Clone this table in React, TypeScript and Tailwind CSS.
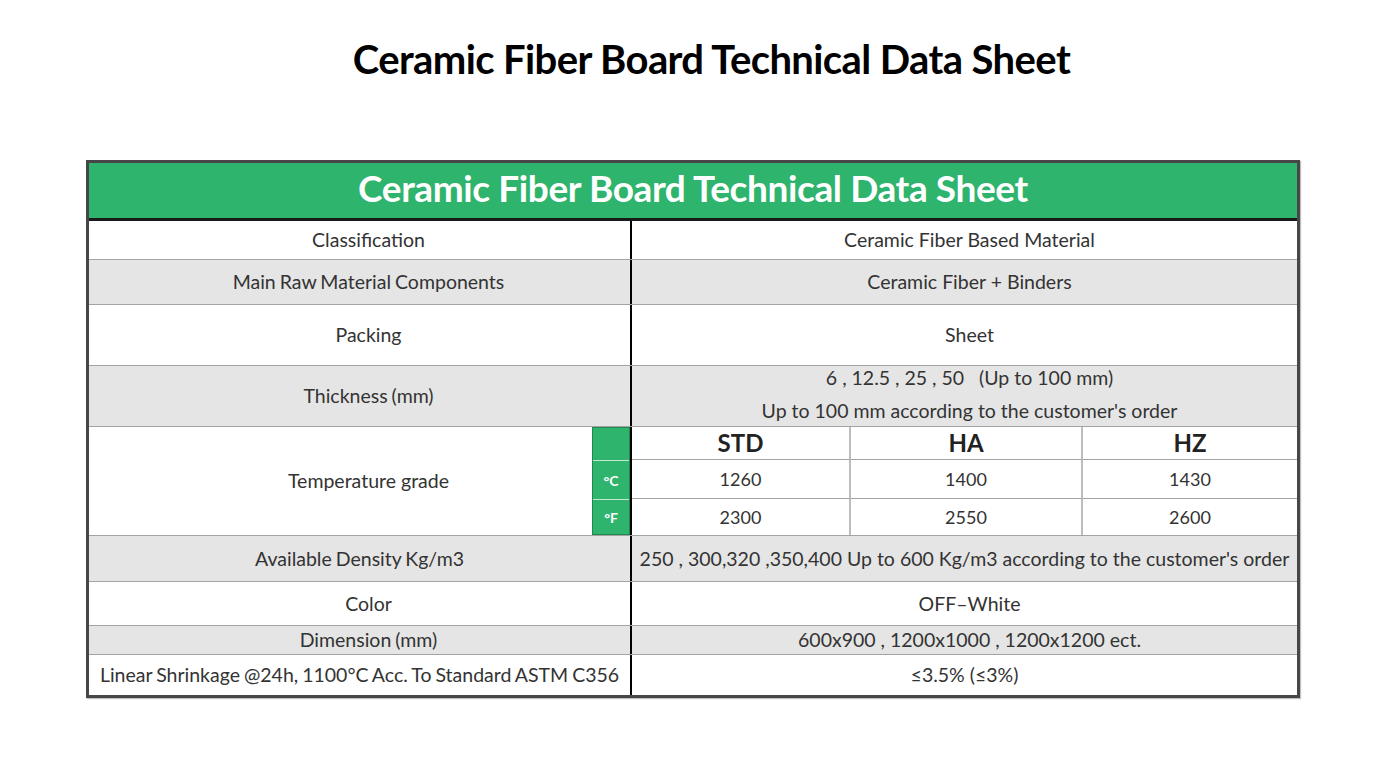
import React from 'react';

interface SpecRow {
  label: string;
  value: React.ReactNode;
  height: string;
  shaded: boolean;
  tight?: boolean;
}

const rowsTop: SpecRow[] = [
  { label: 'Classification', value: 'Ceramic Fiber Based Material', height: 'h-[39px]', shaded: false },
  { label: 'Main Raw Material Components', value: 'Ceramic Fiber + Binders', height: 'h-[45px]', shaded: true },
  { label: 'Packing', value: 'Sheet', height: 'h-[61px]', shaded: false },
  {
    label: 'Thickness (mm)',
    value: (
      <div className="flex flex-col items-center gap-[3px] pb-[4px]">
        <span className="whitespace-pre">6 , 12.5 , 25 , 50   (Up to 100 mm)</span>
        <span>Up to 100 mm according to the customer's order</span>
      </div>
    ),
    height: 'h-[61px]',
    shaded: true,
  },
];

const rowsBottom: SpecRow[] = [
  {
    label: 'Available Density Kg/m3',
    value: "250 , 300,320 ,350,400 Up to 600 Kg/m3 according to the customer's order",
    height: 'h-[46px]',
    shaded: true,
    tight: true,
  },
  { label: 'Color', value: 'OFF–White', height: 'h-[44px]', shaded: false },
  { label: 'Dimension (mm)', value: '600x900 , 1200x1000 , 1200x1200 ect.', height: 'h-[29px]', shaded: true },
  {
    label: 'Linear Shrinkage @24h, 1100°C Acc. To Standard ASTM C356',
    value: '≤3.5% (≤3%)',
    height: 'h-[40px]',
    shaded: false,
    tight: true,
  },
];

const grades = [
  { name: 'STD', c: '1260', f: '2300' },
  { name: 'HA', c: '1400', f: '2550' },
  { name: 'HZ', c: '1430', f: '2600' },
];

const Row: React.FC<{ row: SpecRow; last?: boolean }> = ({ row, last }) => (
  <div
    className={`flex ${row.height} ${row.shaded ? 'bg-[#e5e5e5]' : 'bg-white'} ${
      last ? '' : 'border-b border-[#a3a3a3]'
    }`}
  >
    <div
      className={`w-[541px] flex items-center justify-center text-center whitespace-nowrap [word-spacing:-1px] ${
        row.tight ? '' : 'pl-[18px]'
      }`}
    >
      {row.label}
    </div>
    <div
      className={`flex-1 border-l-2 border-black flex items-center justify-center text-center whitespace-nowrap ${
        row.tight ? '' : 'pl-[10px]'
      }`}
    >
      {row.value}
    </div>
  </div>
);

const App: React.FC = () => {
  return (
    <div className="w-[1380px] h-[757px] bg-white font-['Lato',sans-serif] text-[#333]">
      <h1 className="pt-[35px] pl-[43px] text-center text-[40px] leading-[48px] font-bold tracking-[-0.6px] text-black">
        Ceramic Fiber Board Technical Data Sheet
      </h1>

      <div className="ml-[86px] mt-[77px] w-[1214px] border-[3px] border-[#474747] shadow-[1px_1px_1px_rgba(0,0,0,0.25)] text-[19.5px]">
        {/* Green banner */}
        <div className="h-[58px] bg-[#2eb46c] border-b-[3px] border-[#1a1a1a] flex items-center justify-center">
          <span className="text-white font-bold text-[37px] leading-[44px] tracking-[-0.4px] pb-[6px]">
            Ceramic Fiber Board Technical Data Sheet
          </span>
        </div>

        {rowsTop.map((row) => (
          <Row key={row.label} row={row} />
        ))}

        {/* Temperature grade */}
        <div className="flex h-[109px] bg-white border-b border-[#a3a3a3]">
          <div className="w-[541px] flex">
            <div className="flex-1 flex items-center justify-center pl-[56px]">Temperature grade</div>
            <div className="w-[38px] flex flex-col bg-[#2eb46c] border border-[#1f8a4d] text-white text-[14px] font-bold">
              <div className="h-[33px] border-b border-[#c9e6d4]" />
              <div className="h-[39px] border-b border-[#c9e6d4] flex items-center justify-center">°C</div>
              <div className="flex-1 flex items-center justify-center">°F</div>
            </div>
          </div>
          <div className="flex-1 border-l-2 border-black grid grid-cols-[219px_232px_1fr] grid-rows-[33px_39px_1fr] text-[18px]">
            {grades.map((g, i) => (
              <div
                key={g.name}
                className={`flex items-center justify-center border-b border-[#a3a3a3] font-bold text-[24px] text-[#222] ${
                  i < 2 ? 'border-r-2 border-r-[#bdbdbd]' : ''
                }`}
              >
                {g.name}
              </div>
            ))}
            {grades.map((g, i) => (
              <div
                key={g.name + 'c'}
                className={`flex items-center justify-center border-b border-[#a3a3a3] ${
                  i < 2 ? 'border-r-2 border-r-[#bdbdbd]' : ''
                }`}
              >
                {g.c}
              </div>
            ))}
            {grades.map((g, i) => (
              <div
                key={g.name + 'f'}
                className={`flex items-center justify-center ${i < 2 ? 'border-r-2 border-r-[#bdbdbd]' : ''}`}
              >
                {g.f}
              </div>
            ))}
          </div>
        </div>

        {rowsBottom.map((row, i) => (
          <Row key={row.label} row={row} last={i === rowsBottom.length - 1} />
        ))}
      </div>
    </div>
  );
};

export default App;
